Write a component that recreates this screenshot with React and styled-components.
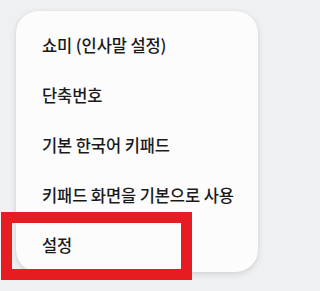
import React from "react";
import styled, { createGlobalStyle } from "styled-components";

const GlobalStyle = createGlobalStyle`
  html, body {
    margin: 0;
    padding: 0;
    background: #eef0f2;
  }
  body {
    font-family: "Noto Sans CJK KR", "Noto Sans", sans-serif;
  }
`;

const Screen = styled.div`
  width: 270px;
  height: 291px;
  padding: 11px 12px 0 16px;
  box-sizing: border-box;
  position: relative;
  overflow: hidden;
`;

const Menu = styled.ul`
  list-style: none;
  margin: 0;
  padding: 9px 0 2px;
  width: 242px;
  background: #fcfcfd;
  border-radius: 22px;
  box-shadow: 0 2px 6px rgba(0, 0, 0, 0.12), 0 0 2px rgba(0, 0, 0, 0.06);
`;

const Item = styled.li`
  height: 50px;
  display: flex;
  align-items: center;
  padding-left: 26px;
  font-size: 16.5px;
  font-weight: 500;
  color: #1a1a1b;
  letter-spacing: -0.1px;
`;

// red highlight drawn over the screenshot
const Highlight = styled.div`
  position: absolute;
  left: 1px;
  top: 212px;
  width: 191px;
  height: 68px;
  border: 11px solid #e61c22;
  box-sizing: border-box;
`;

const items = [
  "쇼미 (인사말 설정)",
  "단축번호",
  "기본 한국어 키패드",
  "키패드 화면을 기본으로 사용",
  "설정",
];

export default function App() {
  return (
    <>
      <GlobalStyle />
      <Screen>
        <Menu>
          {items.map((label) => (
            <Item key={label}>{label}</Item>
          ))}
        </Menu>
        <Highlight />
      </Screen>
    </>
  );
}
